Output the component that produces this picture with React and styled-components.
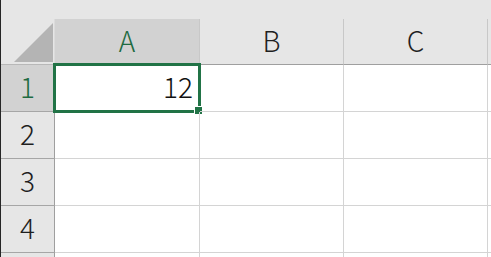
import React from "react";
import styled, { createGlobalStyle } from "styled-components";

const GlobalStyle = createGlobalStyle`
  html, body {
    margin: 0;
    padding: 0;
    background: #ffffff;
    overflow: hidden;
  }
`;

const columns = ["A", "B", "C"];
const rows = [1, 2, 3, 4, 5];
const visibleRows = 4;
const data = { "A1": "12" };

class App extends React.Component {
  render() {
    return (
      <Sheet>
        <GlobalStyle />
        <TopBand />
        <Grid>
          <Corner>
            <CornerTriangle />
          </Corner>
          {columns.map((col) => (
            <ColHead key={col} $selected={col === "A"}>{col}</ColHead>
          ))}
          <ColHead $last />
          {rows.map((row) => (
            <React.Fragment key={row}>
              <RowHead $selected={row === 1}>{row <= visibleRows ? row : ""}</RowHead>
              {columns.map((col) => {
                const id = col + row;
                return (
                  <Cell key={id}>
                    {data[id]}
                    {id === "A1" && (
                      <Selection>
                        <FillHandle />
                      </Selection>
                    )}
                  </Cell>
                );
              })}
              <Cell $last />
            </React.Fragment>
          ))}
        </Grid>
      </Sheet>
    );
  }
}

export default App;

const Sheet = styled.div`
  width: 491px;
  height: 257px;
  box-sizing: border-box;
  border-left: 1px solid #262626;
  overflow: hidden;
  font-family: "Noto Sans CJK JP", "Inter", sans-serif;
`;

const TopBand = styled.div`
  height: 19px;
  background: #e6e6e6;
`;

const Grid = styled.div`
  display: grid;
  grid-template-columns: 54px 145px 144px 144px 1fr;
  grid-template-rows: 46px repeat(5, 47px);
`;

const Corner = styled.div`
  box-sizing: border-box;
  background: #e6e6e6;
  border-right: 1px solid #dcdcdc;
  border-bottom: 1px solid #b8b8b8;
  display: flex;
  align-items: flex-end;
  justify-content: flex-end;
  padding: 0 1px 2px 0;
`;

const CornerTriangle = styled.div`
  width: 39px;
  height: 39px;
  background: #b4b4b4;
  clip-path: polygon(100% 0, 100% 100%, 0 100%);
`;

const HeadBase = styled.div`
  box-sizing: border-box;
  display: flex;
  align-items: center;
  justify-content: center;
  padding-bottom: 4px;
  font-size: 28px;
  font-weight: 300;
  line-height: 1;
`;

const ColHead = styled(HeadBase)`
  background: ${(p) => (p.$selected ? "#d2d2d2" : "#e6e6e6")};
  color: ${(p) => (p.$selected ? "#1e6b41" : "#1f1f1f")};
  border-right: ${(p) => (p.$last ? "none" : "1px solid #c8c8c8")};
  border-bottom: 1px solid #9f9f9f;
`;

const RowHead = styled(HeadBase)`
  background: ${(p) => (p.$selected ? "#d2d2d2" : "#e6e6e6")};
  color: ${(p) => (p.$selected ? "#1e6b41" : "#1f1f1f")};
  border-right: 1px solid #9f9f9f;
  border-bottom: 1px solid #a6a6a6;
`;

const Cell = styled.div`
  position: relative;
  box-sizing: border-box;
  display: flex;
  align-items: center;
  justify-content: flex-end;
  padding: 0 6px 4px 0;
  border-right: ${(p) => (p.$last ? "none" : "1px solid #d4d4d4")};
  border-bottom: 1px solid #d4d4d4;
  font-size: 28px;
  font-weight: 300;
  color: #111111;
  line-height: 1;
`;

const Selection = styled.div`
  position: absolute;
  top: -2px;
  left: -2px;
  right: -2px;
  bottom: -2px;
  border: 3px solid #217346;
  pointer-events: none;
`;

const FillHandle = styled.div`
  position: absolute;
  right: -4px;
  bottom: -4px;
  width: 7px;
  height: 7px;
  background: #217346;
  box-shadow: 0 0 0 1px #ffffff;
`;
